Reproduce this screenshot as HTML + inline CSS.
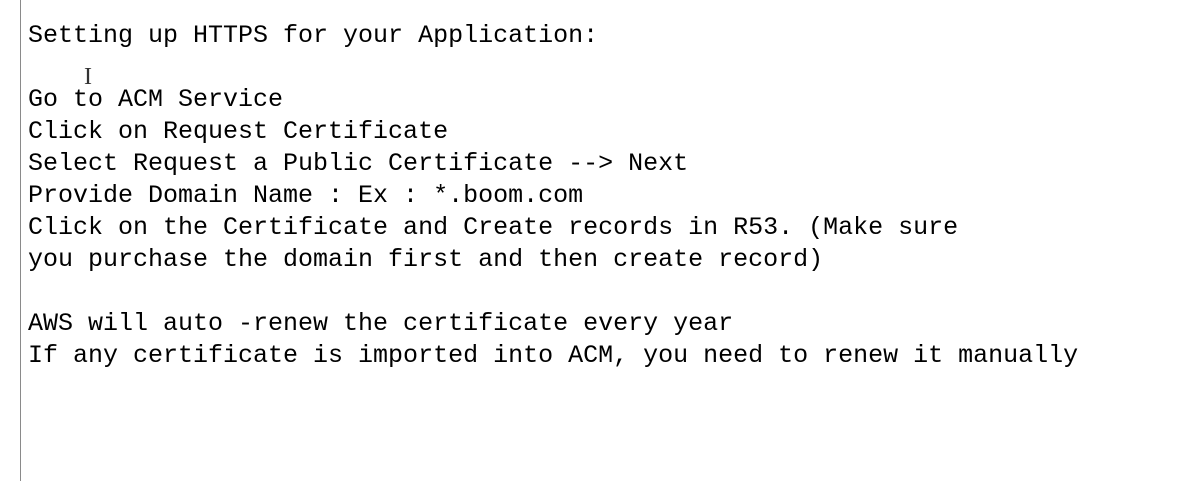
<!DOCTYPE html>
<html><head><style>
html,body{margin:0;padding:0;background:#fff;width:1191px;height:481px;overflow:hidden}
.bar{position:absolute;left:20px;top:0;width:1px;height:481px;background:#8a8a8a}
pre{position:absolute;left:28px;top:20px;margin:0;font-family:"Liberation Mono",monospace;font-size:25px;line-height:32px;color:#000}
.cur{position:absolute;left:84px;top:64px;font-family:"Liberation Serif",serif;font-size:24px;color:#333}
</style></head><body>
<div class="bar"></div>
<div class="cur">I</div>
<pre>Setting up HTTPS for your Application:

Go to ACM Service
Click on Request Certificate
Select Request a Public Certificate --&gt; Next
Provide Domain Name : Ex : *.boom.com
Click on the Certificate and Create records in R53. (Make sure
you purchase the domain first and then create record)

AWS will auto -renew the certificate every year
If any certificate is imported into ACM, you need to renew it manually</pre>
</body></html>
